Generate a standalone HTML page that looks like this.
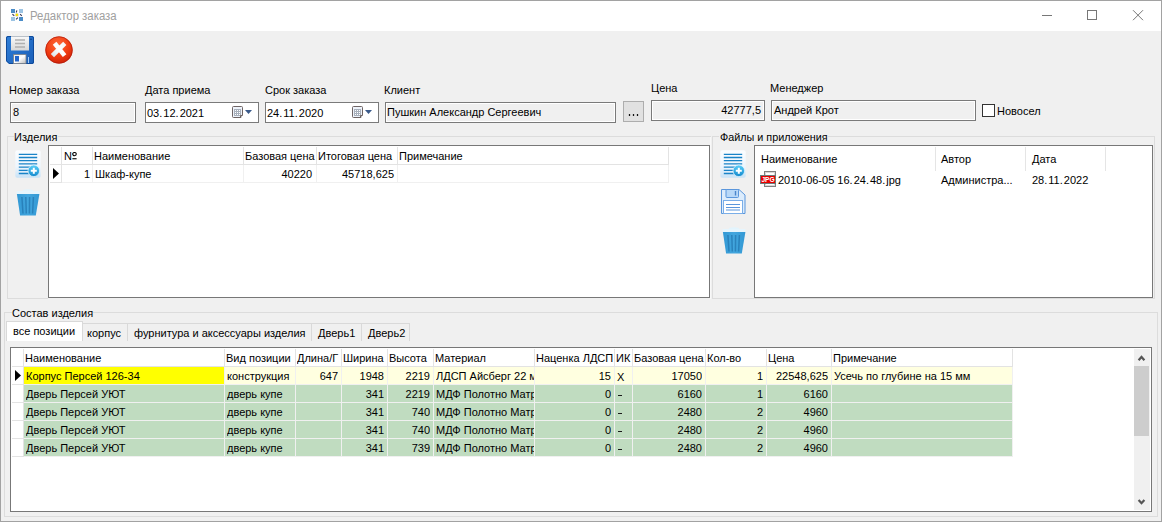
<!DOCTYPE html>
<html><head><meta charset="utf-8"><style>
html,body{margin:0;padding:0}
body{width:1162px;height:522px;position:relative;overflow:hidden;background:#f0f0f0;font-family:"Liberation Sans",sans-serif;font-size:11px;color:#000}
body div{position:absolute}
.t{white-space:nowrap;line-height:13px}
</style></head><body>
<div style="left:0px;top:0px;width:1162px;height:31px;background:#fff"></div>
<div style="left:0px;top:0px;width:1162px;height:1px;background:#a2a2a2"></div>
<div style="left:0px;top:0px;width:1px;height:522px;background:#a2a2a2"></div>
<div style="left:1161px;top:0px;width:1px;height:522px;background:#a2a2a2"></div>
<div style="left:0px;top:521px;width:1162px;height:1px;background:#a2a2a2"></div>
<svg style="position:absolute;left:11px;top:9px" width="12" height="12" viewBox="0 0 12 12">
<rect x="0" y="0" width="4" height="4" fill="#4a8cc8"/><rect x="8" y="0" width="4" height="4" fill="#9cc4e4"/>
<rect x="0" y="8" width="4" height="4" fill="#9cc4e4"/><rect x="8" y="8" width="4" height="4" fill="#4a8cc8"/>
<circle cx="5.9" cy="5.9" r="2.1" fill="#e4e4f8"/>
<circle cx="5.9" cy="5.9" r="1.4" fill="#f6e000"/>
<path d="M5.9 1.3L5.2 3.5M1.4 5.3L3.3 6.8M9.1 5.1L10.8 6.9M6.9 8.6L5 10.4" stroke="#3a3a58" stroke-width="1.1"/></svg>
<div class="t" style="left:30px;top:8px;font-size:12.3px;line-height:16px;color:#a0a0a0;transform:scaleX(0.925);transform-origin:0 0">Редактор заказа</div>
<svg style="position:absolute;left:1040px;top:8px" width="110" height="16" viewBox="0 0 110 16">
<path d="M2 7.5h10" stroke="#777" stroke-width="1"/>
<rect x="47.5" y="2.5" width="9" height="9" fill="none" stroke="#777" stroke-width="1"/>
<path d="M93 2.2L103 12.2M103 2.2L93 12.2" stroke="#777" stroke-width="1"/></svg>
<svg style="position:absolute;left:6px;top:36px" width="28" height="28" viewBox="0 0 28 28">
<defs><linearGradient id="fb" x1="0" y1="0" x2="1" y2="1"><stop offset="0" stop-color="#2f7fd8"/><stop offset="1" stop-color="#1b5fb8"/></linearGradient>
<linearGradient id="fl" x1="0" y1="0" x2="0" y2="1"><stop offset="0" stop-color="#fafafa"/><stop offset="1" stop-color="#d8d8d8"/></linearGradient>
<linearGradient id="fs" x1="0" y1="0" x2="1" y2="1"><stop offset="0" stop-color="#e8e8e8"/><stop offset="0.5" stop-color="#ffffff"/><stop offset="1" stop-color="#b8b8b8"/></linearGradient></defs>
<path d="M2 0H26Q28 0 28 2V26Q28 28 26 28H3L0 25V2Q0 0 2 0Z" fill="url(#fb)"/>
<path d="M0.5 2Q0.5 0.5 2 0.5H26Q27.5 0.5 27.5 2V26Q27.5 27.5 26 27.5H3.2L0.5 24.8Z" fill="none" stroke="#0f4a9a" stroke-width="1"/>
<rect x="5" y="0" width="18" height="14.5" fill="url(#fl)"/>
<path d="M5 0.5H23" stroke="#b8c0c8" stroke-width="1"/>
<path d="M9 4h10M9 7.5h10M9 11h10" stroke="#b0b0b0" stroke-width="1.6"/>
<rect x="7.5" y="18.5" width="12.5" height="9" fill="url(#fs)" stroke="#7a8088" stroke-width="0.8"/>
<rect x="9" y="20" width="4" height="5.5" fill="#2266cc"/>
<path d="M22.5 21V27" stroke="#a8ccf4" stroke-width="1"/>
<circle cx="25" cy="3.2" r="0.8" fill="#0a3a80"/></svg>
<svg style="position:absolute;left:45px;top:36px" width="28" height="28" viewBox="0 0 28 28">
<defs><radialGradient id="rc" cx="0.45" cy="0.3" r="0.75"><stop offset="0" stop-color="#ff6a3a"/><stop offset="0.6" stop-color="#f03a10"/><stop offset="1" stop-color="#c82008"/></radialGradient>
<linearGradient id="xw" gradientUnits="userSpaceOnUse" x1="7" y1="20" x2="20" y2="7"><stop offset="0" stop-color="#d8e4ea"/><stop offset="0.5" stop-color="#ffffff"/><stop offset="1" stop-color="#f4f4f4"/></linearGradient></defs>
<circle cx="14" cy="14" r="13.6" fill="url(#rc)"/>
<circle cx="14" cy="14" r="13.3" fill="none" stroke="#b01a0a" stroke-width="0.7"/>
<path d="M9.6 7.2L19.6 19.6M19.8 7.4L7.4 19.6" stroke="url(#xw)" stroke-width="4.6" stroke-linecap="butt"/></svg>
<div class="t" style="left:9px;top:84px;font-size:11px;">Номер заказа</div>
<div class="t" style="left:145px;top:84px;font-size:11px;">Дата приема</div>
<div class="t" style="left:265px;top:84px;font-size:11px;">Срок заказа</div>
<div class="t" style="left:384px;top:84px;font-size:11px;">Клиент</div>
<div class="t" style="left:651px;top:82px;font-size:11px;">Цена</div>
<div class="t" style="left:770px;top:82px;font-size:11px;">Менеджер</div>
<div style="left:10px;top:102px;width:126px;height:21px;background:#f0f0f0;border:1px solid #7a7a7a;box-sizing:border-box"></div>
<div style="left:11px;top:103px;width:124px;height:19px;border:1px solid #fff;box-sizing:border-box"></div>
<div class="t" style="left:13px;top:106px;font-size:11px;">8</div>
<div style="left:145px;top:102px;width:114px;height:21px;background:#fff;border:1px solid #7a7a7a;box-sizing:border-box"></div>
<div class="t" style="left:147px;top:107px;font-size:11px;">03<span style="margin-right:1px">.</span>12<span style="margin-right:1px">.</span>2021</div>
<svg style="position:absolute;left:232px;top:106px" width="22" height="12" viewBox="0 0 22 12">
<path d="M1.5 0.5H9.5Q10.5 0.5 10.5 1.5V9L9 10.5V11.5H1.5Q0.5 11.5 0.5 10.5V1.5Q0.5 0.5 1.5 0.5Z" fill="#eef3fb" stroke="#6e6464"/>
<rect x="2" y="3" width="7" height="7" fill="#a8b0bc"/>
<path d="M3 4h1v1h-1zM5 4h1v1h-1zM7 4h1v1h-1zM3 6h1v1h-1zM5 6h1v1h-1zM7 6h1v1h-1zM3 8h1v1h-1zM5 8h1v1h-1zM7 8h1v1h-1z" fill="#fff"/>
<path d="M8.5 11.5V9.5H10.5" fill="none" stroke="#6e6464"/>
<path d="M13 4H20L16.5 8Z" fill="#3a5a8a"/></svg>
<div style="left:265px;top:102px;width:114px;height:21px;background:#fff;border:1px solid #7a7a7a;box-sizing:border-box"></div>
<div class="t" style="left:267px;top:107px;font-size:11px;">24<span style="margin-right:1px">.</span>11<span style="margin-right:1px">.</span>2020</div>
<svg style="position:absolute;left:352px;top:106px" width="22" height="12" viewBox="0 0 22 12">
<path d="M1.5 0.5H9.5Q10.5 0.5 10.5 1.5V9L9 10.5V11.5H1.5Q0.5 11.5 0.5 10.5V1.5Q0.5 0.5 1.5 0.5Z" fill="#eef3fb" stroke="#6e6464"/>
<rect x="2" y="3" width="7" height="7" fill="#a8b0bc"/>
<path d="M3 4h1v1h-1zM5 4h1v1h-1zM7 4h1v1h-1zM3 6h1v1h-1zM5 6h1v1h-1zM7 6h1v1h-1zM3 8h1v1h-1zM5 8h1v1h-1zM7 8h1v1h-1z" fill="#fff"/>
<path d="M8.5 11.5V9.5H10.5" fill="none" stroke="#6e6464"/>
<path d="M13 4H20L16.5 8Z" fill="#3a5a8a"/></svg>
<div style="left:385px;top:102px;width:231px;height:21px;background:#f0f0f0;border:1px solid #7a7a7a;box-sizing:border-box"></div>
<div style="left:386px;top:103px;width:229px;height:19px;border:1px solid #fff;box-sizing:border-box"></div>
<div class="t" style="left:387px;top:106px;font-size:11px;">Пушкин Александр Сергеевич</div>
<div style="left:623px;top:101px;width:21px;height:21px;background:#e1e1e1;border:1px solid #adadad;box-sizing:border-box"></div>
<div style="left:628px;top:114px;width:3px;height:2px;background:#c4c4c4"></div>
<div style="left:629px;top:114px;width:1px;height:2px;background:#111"></div>
<div style="left:632px;top:114px;width:3px;height:2px;background:#c4c4c4"></div>
<div style="left:633px;top:114px;width:1px;height:2px;background:#111"></div>
<div style="left:636px;top:114px;width:3px;height:2px;background:#c4c4c4"></div>
<div style="left:637px;top:114px;width:1px;height:2px;background:#111"></div>
<div style="left:651px;top:100px;width:114px;height:21px;background:#f0f0f0;border:1px solid #7a7a7a;box-sizing:border-box"></div>
<div style="left:652px;top:101px;width:112px;height:19px;border:1px solid #fff;box-sizing:border-box"></div>
<div class="t" style="left:661px;top:104px;width:100px;text-align:right;font-size:11px;">42777,5</div>
<div style="left:771px;top:100px;width:205px;height:21px;background:#f0f0f0;border:1px solid #7a7a7a;box-sizing:border-box"></div>
<div style="left:772px;top:101px;width:203px;height:19px;border:1px solid #fff;box-sizing:border-box"></div>
<div class="t" style="left:774px;top:104px;font-size:11px;">Андрей Крот</div>
<div style="left:982px;top:104px;width:13px;height:13px;background:#fff;border:1px solid #333;box-sizing:border-box"></div>
<div class="t" style="left:997px;top:105px;font-size:11px;">Новосел</div>
<div style="left:7px;top:136px;width:704px;height:1px;background:#dcdcdc"></div>
<div style="left:7px;top:298px;width:704px;height:1px;background:#dcdcdc"></div>
<div style="left:7px;top:136px;width:1px;height:163px;background:#dcdcdc"></div>
<div style="left:710px;top:136px;width:1px;height:163px;background:#dcdcdc"></div>
<div style="left:14px;top:130px;width:44px;height:12px;background:#f0f0f0"></div>
<div class="t" style="left:14px;top:131px;font-size:11px;">Изделия</div>
<div style="left:48px;top:298px;width:663px;height:1px;background:#f0f0f0"></div>
<div style="left:710px;top:137px;width:1px;height:162px;background:#f8f8f8"></div>
<div style="left:711px;top:136px;width:1px;height:1px;background:#f0f0f0"></div>
<div style="left:712px;top:136px;width:443px;height:1px;background:#dcdcdc"></div>
<div style="left:712px;top:298px;width:443px;height:1px;background:#dcdcdc"></div>
<div style="left:712px;top:136px;width:1px;height:163px;background:#dcdcdc"></div>
<div style="left:1154px;top:136px;width:1px;height:163px;background:#dcdcdc"></div>
<div style="left:719px;top:130px;width:109px;height:12px;background:#f0f0f0"></div>
<div class="t" style="left:720px;top:131px;font-size:11px;font-size:10.8px">Файлы и приложения</div>
<div style="left:4px;top:312px;width:1154px;height:1px;background:#dcdcdc"></div>
<div style="left:4px;top:516px;width:1154px;height:1px;background:#dcdcdc"></div>
<div style="left:4px;top:312px;width:1px;height:205px;background:#dcdcdc"></div>
<div style="left:1157px;top:312px;width:1px;height:205px;background:#dcdcdc"></div>
<div style="left:12px;top:306px;width:81px;height:12px;background:#f0f0f0"></div>
<div class="t" style="left:12px;top:307px;font-size:11px;">Состав изделия</div>
<svg style="position:absolute;left:15px;top:150px" width="26" height="28" viewBox="0 0 26 28">
<defs><linearGradient id="ad15" x1="0" y1="0" x2="0" y2="1"><stop offset="0" stop-color="#fbfdff"/><stop offset="0.6" stop-color="#eef6fd"/><stop offset="1" stop-color="#c8e2f6"/></linearGradient>
<linearGradient id="pc15" x1="0" y1="0" x2="0" y2="1"><stop offset="0" stop-color="#5ad0fa"/><stop offset="1" stop-color="#1288cc"/></linearGradient></defs>
<rect x="0.3" y="0.3" width="25.4" height="27.4" rx="2" fill="url(#ad15)"/>
<path d="M3.8 4.3h18.4M3.8 7.5h18.4M3.8 10.7h18.4M3.8 13.9h18.4M3.8 17.1h12M3.8 20.3h10M3.8 23.5h10" stroke="#1a84c8" stroke-width="1.3"/>
<circle cx="18.8" cy="20.8" r="5.8" fill="url(#pc15)" stroke="#e8f6fe" stroke-width="0.7"/>
<path d="M18.8 17.8v6M15.8 20.8h6" stroke="#fff" stroke-width="2"/></svg>
<svg style="position:absolute;left:16px;top:189px" width="24" height="27" viewBox="0 0 24 27">
<defs><linearGradient id="tr16" x1="0" y1="0" x2="1" y2="0"><stop offset="0" stop-color="#3298d4"/><stop offset="0.5" stop-color="#42a6de"/><stop offset="1" stop-color="#3298d4"/></linearGradient></defs>
<path d="M7 2V1Q12 -0.6 17 1V2Z" fill="#e2f4fd"/>
<rect x="0.6" y="2" width="22.8" height="3" fill="#e6f5fd"/>
<path d="M0.9 5H23.4L19.8 26.6H4.1Z" fill="url(#tr16)"/>
<path d="M5.9 8L7 24.5M9.8 8L10.3 24.5M13.6 8L13.4 24.5M17.4 8L16.6 24.5" stroke="#2378b2" stroke-width="1.5" opacity="0.75"/></svg>
<svg style="position:absolute;left:720px;top:150px" width="26" height="28" viewBox="0 0 26 28">
<defs><linearGradient id="ad720" x1="0" y1="0" x2="0" y2="1"><stop offset="0" stop-color="#fbfdff"/><stop offset="0.6" stop-color="#eef6fd"/><stop offset="1" stop-color="#c8e2f6"/></linearGradient>
<linearGradient id="pc720" x1="0" y1="0" x2="0" y2="1"><stop offset="0" stop-color="#5ad0fa"/><stop offset="1" stop-color="#1288cc"/></linearGradient></defs>
<rect x="0.3" y="0.3" width="25.4" height="27.4" rx="2" fill="url(#ad720)"/>
<path d="M3.8 4.3h18.4M3.8 7.5h18.4M3.8 10.7h18.4M3.8 13.9h18.4M3.8 17.1h12M3.8 20.3h10M3.8 23.5h10" stroke="#1a84c8" stroke-width="1.3"/>
<circle cx="18.8" cy="20.8" r="5.8" fill="url(#pc720)" stroke="#e8f6fe" stroke-width="0.7"/>
<path d="M18.8 17.8v6M15.8 20.8h6" stroke="#fff" stroke-width="2"/></svg>
<svg style="position:absolute;left:720px;top:188px" width="26" height="27" viewBox="0 0 26 27">
<path d="M1.5 1.5H19L25 7V25.5H1.5Z" fill="#dcecfc" stroke="#5a96dc" stroke-width="1"/>
<rect x="6" y="1.5" width="12.5" height="8" rx="1" fill="#b8d8f8" stroke="#5a96dc" stroke-width="1"/>
<path d="M15.5 3v4.5" stroke="#4a86cc" stroke-width="1.4"/>
<rect x="3.5" y="12.5" width="19" height="13" fill="#fff" stroke="#7aaee8" stroke-width="1"/>
<path d="M6 16.5h14M6 19.5h14M6 22h14" stroke="#5a96dc" stroke-width="1"/></svg>
<svg style="position:absolute;left:722px;top:227px" width="24" height="27" viewBox="0 0 24 27">
<defs><linearGradient id="tr722" x1="0" y1="0" x2="1" y2="0"><stop offset="0" stop-color="#3298d4"/><stop offset="0.5" stop-color="#42a6de"/><stop offset="1" stop-color="#3298d4"/></linearGradient></defs>
<path d="M7 2V1Q12 -0.6 17 1V2Z" fill="#e2f4fd"/>
<rect x="0.6" y="2" width="22.8" height="3" fill="#e6f5fd"/>
<path d="M0.9 5H23.4L19.8 26.6H4.1Z" fill="url(#tr722)"/>
<path d="M5.9 8L7 24.5M9.8 8L10.3 24.5M13.6 8L13.4 24.5M17.4 8L16.6 24.5" stroke="#2378b2" stroke-width="1.5" opacity="0.75"/></svg>
<div style="left:48px;top:145px;width:662px;height:153px;background:#fff;border:1px solid #777;box-sizing:border-box"></div>
<div style="left:50px;top:164px;width:619px;height:1px;background:#e3e3e3"></div>
<div style="left:50px;top:182px;width:12px;height:1px;background:#e3e3e3"></div>
<div style="left:62px;top:182px;width:607px;height:1px;background:#f0f0f0"></div>
<div style="left:61px;top:147px;width:1px;height:18px;background:#e3e3e3"></div>
<div style="left:92px;top:147px;width:1px;height:18px;background:#e3e3e3"></div>
<div style="left:243px;top:147px;width:1px;height:18px;background:#e3e3e3"></div>
<div style="left:316px;top:147px;width:1px;height:18px;background:#e3e3e3"></div>
<div style="left:397px;top:147px;width:1px;height:18px;background:#e3e3e3"></div>
<div style="left:668px;top:147px;width:1px;height:18px;background:#e3e3e3"></div>
<div style="left:61px;top:165px;width:1px;height:18px;background:#e3e3e3"></div>
<div style="left:92px;top:165px;width:1px;height:17px;background:#f0f0f0"></div>
<div style="left:243px;top:165px;width:1px;height:17px;background:#f0f0f0"></div>
<div style="left:316px;top:165px;width:1px;height:17px;background:#f0f0f0"></div>
<div style="left:397px;top:165px;width:1px;height:17px;background:#f0f0f0"></div>
<div style="left:668px;top:165px;width:1px;height:17px;background:#f0f0f0"></div>
<div class="t" style="left:64px;top:150px;font-size:11px;">N</div>
<svg style="position:absolute;left:72px;top:152px" width="5" height="8" viewBox="0 0 5 8"><ellipse cx="2.5" cy="2.1" rx="1.8" ry="1.6" fill="none" stroke="#000" stroke-width="1.1"/><rect x="0.4" y="6.2" width="4.2" height="1.1" fill="#000"/></svg>
<div class="t" style="left:94px;top:150px;font-size:11px;">Наименование</div>
<div class="t" style="left:245px;top:150px;font-size:11px;">Базовая цена</div>
<div class="t" style="left:318px;top:150px;font-size:11px;">Итоговая цена</div>
<div class="t" style="left:399px;top:150px;font-size:11px;">Примечание</div>
<div class="t" style="left:60px;top:168px;width:30px;text-align:right;font-size:11px;">1</div>
<div class="t" style="left:95px;top:168px;font-size:11px;">Шкаф-купе</div>
<div class="t" style="left:252px;top:168px;width:60px;text-align:right;font-size:11px;">40220</div>
<div class="t" style="left:324px;top:168px;width:70px;text-align:right;font-size:11px;">45718,625</div>
<svg style="position:absolute;left:53px;top:168px" width="7" height="11" viewBox="0 0 7 11"><path d="M0 0L6 5.5L0 11Z" fill="#000"/></svg>
<div style="left:754px;top:145px;width:399px;height:153px;background:#fff;border:1px solid #777;box-sizing:border-box"></div>
<div style="left:935px;top:147px;width:1px;height:24px;background:#e5e5e5"></div>
<div style="left:1025px;top:147px;width:1px;height:24px;background:#e5e5e5"></div>
<div style="left:1105px;top:147px;width:1px;height:24px;background:#e5e5e5"></div>
<div class="t" style="left:761px;top:153px;font-size:11px;">Наименование</div>
<div class="t" style="left:941px;top:153px;font-size:11px;">Автор</div>
<div class="t" style="left:1032px;top:153px;font-size:11px;">Дата</div>
<svg style="position:absolute;left:760px;top:171px" width="16" height="16" viewBox="0 0 16 16">
<rect x="4.5" y="0.5" width="11" height="15" fill="#fff" stroke="#808080"/>
<rect x="5.5" y="1.5" width="9" height="13" fill="none" stroke="#d8d8d8"/>
<rect x="0.5" y="4.5" width="15" height="8" fill="#e80000" stroke="#6a7a7a"/>
<text x="8" y="11" font-family="Liberation Sans" font-weight="bold" font-size="6.6" fill="#fff" text-anchor="middle">JPG</text></svg>
<div class="t" style="left:778px;top:174px;font-size:11px;">2010-06-05 16<span style="margin-right:1px">.</span>24<span style="margin-right:1px">.</span>48<span style="margin-right:1px">.</span>jpg</div>
<div class="t" style="left:941px;top:174px;font-size:11px;">Администра...</div>
<div class="t" style="left:1032px;top:174px;font-size:11px;">28<span style="margin-right:1px">.</span>11<span style="margin-right:1px">.</span>2022</div>
<div style="left:6px;top:321px;width:77px;height:20px;background:#fff;border:1px solid #d9d9d9;border-bottom:none;box-sizing:border-box"></div>
<div style="left:82px;top:323px;width:46px;height:18px;border:1px solid #d9d9d9;border-bottom:none;box-sizing:border-box"></div>
<div style="left:127px;top:323px;width:185px;height:18px;border:1px solid #d9d9d9;border-bottom:none;box-sizing:border-box"></div>
<div style="left:311px;top:323px;width:51px;height:18px;border:1px solid #d9d9d9;border-bottom:none;box-sizing:border-box"></div>
<div style="left:361px;top:323px;width:49px;height:18px;border:1px solid #d9d9d9;border-bottom:none;box-sizing:border-box"></div>
<div class="t" style="left:13px;top:325px;font-size:11px;">все позиции</div>
<div class="t" style="left:87px;top:327px;font-size:11px;">корпус</div>
<div class="t" style="left:134px;top:327px;font-size:11px;">фурнитура и аксессуары изделия</div>
<div class="t" style="left:318px;top:327px;font-size:11px;">Дверь1</div>
<div class="t" style="left:368px;top:327px;font-size:11px;">Дверь2</div>
<div style="left:10px;top:347px;width:1142px;height:165px;background:#fff;border:1px solid #777;box-sizing:border-box"></div>
<div style="left:24px;top:367px;width:200px;height:17px;background:#ffff00"></div>
<div style="left:225px;top:367px;width:787px;height:17px;background:#ffffe0"></div>
<div style="left:24px;top:385px;width:988px;height:17px;background:#c0dcc0"></div>
<div style="left:24px;top:403px;width:988px;height:17px;background:#c0dcc0"></div>
<div style="left:24px;top:421px;width:988px;height:17px;background:#c0dcc0"></div>
<div style="left:24px;top:439px;width:988px;height:17px;background:#c0dcc0"></div>
<div style="left:12px;top:366px;width:1001px;height:1px;background:#e3e3e3"></div>
<div style="left:12px;top:384px;width:12px;height:1px;background:#e3e3e3"></div>
<div style="left:24px;top:384px;width:989px;height:1px;background:#f0f0f0"></div>
<div style="left:12px;top:402px;width:12px;height:1px;background:#e3e3e3"></div>
<div style="left:24px;top:402px;width:989px;height:1px;background:#f0f0f0"></div>
<div style="left:12px;top:420px;width:12px;height:1px;background:#e3e3e3"></div>
<div style="left:24px;top:420px;width:989px;height:1px;background:#f0f0f0"></div>
<div style="left:12px;top:438px;width:12px;height:1px;background:#e3e3e3"></div>
<div style="left:24px;top:438px;width:989px;height:1px;background:#f0f0f0"></div>
<div style="left:12px;top:456px;width:12px;height:1px;background:#e3e3e3"></div>
<div style="left:24px;top:456px;width:989px;height:1px;background:#f0f0f0"></div>
<div style="left:23px;top:349px;width:1px;height:18px;background:#e3e3e3"></div>
<div style="left:224px;top:349px;width:1px;height:18px;background:#e3e3e3"></div>
<div style="left:295px;top:349px;width:1px;height:18px;background:#e3e3e3"></div>
<div style="left:341px;top:349px;width:1px;height:18px;background:#e3e3e3"></div>
<div style="left:387px;top:349px;width:1px;height:18px;background:#e3e3e3"></div>
<div style="left:433px;top:349px;width:1px;height:18px;background:#e3e3e3"></div>
<div style="left:534px;top:349px;width:1px;height:18px;background:#e3e3e3"></div>
<div style="left:614px;top:349px;width:1px;height:18px;background:#e3e3e3"></div>
<div style="left:632px;top:349px;width:1px;height:18px;background:#e3e3e3"></div>
<div style="left:705px;top:349px;width:1px;height:18px;background:#e3e3e3"></div>
<div style="left:766px;top:349px;width:1px;height:18px;background:#e3e3e3"></div>
<div style="left:831px;top:349px;width:1px;height:18px;background:#e3e3e3"></div>
<div style="left:1012px;top:349px;width:1px;height:18px;background:#e3e3e3"></div>
<div style="left:23px;top:367px;width:1px;height:90px;background:#e3e3e3"></div>
<div style="left:224px;top:367px;width:1px;height:90px;background:#f0f0f0"></div>
<div style="left:295px;top:367px;width:1px;height:90px;background:#f0f0f0"></div>
<div style="left:341px;top:367px;width:1px;height:90px;background:#f0f0f0"></div>
<div style="left:387px;top:367px;width:1px;height:90px;background:#f0f0f0"></div>
<div style="left:433px;top:367px;width:1px;height:90px;background:#f0f0f0"></div>
<div style="left:534px;top:367px;width:1px;height:90px;background:#f0f0f0"></div>
<div style="left:614px;top:367px;width:1px;height:90px;background:#f0f0f0"></div>
<div style="left:632px;top:367px;width:1px;height:90px;background:#f0f0f0"></div>
<div style="left:705px;top:367px;width:1px;height:90px;background:#f0f0f0"></div>
<div style="left:766px;top:367px;width:1px;height:90px;background:#f0f0f0"></div>
<div style="left:831px;top:367px;width:1px;height:90px;background:#f0f0f0"></div>
<div style="left:1012px;top:367px;width:1px;height:90px;background:#f0f0f0"></div>
<div class="t" style="left:25px;top:352px;width:199px;overflow:hidden">Наименование</div>
<div class="t" style="left:226px;top:352px;width:69px;overflow:hidden">Вид позиции</div>
<div class="t" style="left:297px;top:352px;width:44px;overflow:hidden">Длина/Г</div>
<div class="t" style="left:343px;top:352px;width:44px;overflow:hidden">Ширина</div>
<div class="t" style="left:389px;top:352px;width:44px;overflow:hidden">Высота</div>
<div class="t" style="left:435px;top:352px;width:99px;overflow:hidden">Материал</div>
<div class="t" style="left:536px;top:352px;width:78px;overflow:hidden">Наценка ЛДСП</div>
<div class="t" style="left:616px;top:352px;width:16px;overflow:hidden">ИК</div>
<div class="t" style="left:634px;top:352px;width:71px;overflow:hidden">Базовая цена</div>
<div class="t" style="left:707px;top:352px;width:59px;overflow:hidden">Кол-во</div>
<div class="t" style="left:768px;top:352px;width:63px;overflow:hidden">Цена</div>
<div class="t" style="left:833px;top:352px;width:179px;overflow:hidden">Примечание</div>
<div class="t" style="left:26px;top:370px;width:198px;overflow:hidden">Корпус Персей 126-34</div>
<div class="t" style="left:227px;top:370px;width:68px;overflow:hidden">конструкция</div>
<div class="t" style="left:297px;top:370px;width:41px;text-align:right;overflow:hidden">647</div>
<div class="t" style="left:343px;top:370px;width:41px;text-align:right;overflow:hidden">1948</div>
<div class="t" style="left:389px;top:370px;width:41px;text-align:right;overflow:hidden">2219</div>
<div class="t" style="left:436px;top:370px;width:98px;overflow:hidden">ЛДСП Айсберг 22 мм</div>
<div class="t" style="left:536px;top:370px;width:75px;text-align:right;overflow:hidden">15</div>
<div class="t" style="left:617px;top:371px">Х</div>
<div class="t" style="left:634px;top:370px;width:68px;text-align:right;overflow:hidden">17050</div>
<div class="t" style="left:707px;top:370px;width:56px;text-align:right;overflow:hidden">1</div>
<div class="t" style="left:768px;top:370px;width:60px;text-align:right;overflow:hidden">22548,625</div>
<div class="t" style="left:834px;top:370px;width:178px;overflow:hidden">Усечь по глубине на 15 мм</div>
<div class="t" style="left:26px;top:388px;width:198px;overflow:hidden">Дверь Персей УЮТ</div>
<div class="t" style="left:227px;top:388px;width:68px;overflow:hidden">дверь купе</div>
<div class="t" style="left:343px;top:388px;width:41px;text-align:right;overflow:hidden">341</div>
<div class="t" style="left:389px;top:388px;width:41px;text-align:right;overflow:hidden">2219</div>
<div class="t" style="left:436px;top:388px;width:98px;overflow:hidden">МДФ Полотно Матрица</div>
<div class="t" style="left:536px;top:388px;width:75px;text-align:right;overflow:hidden">0</div>
<div style="left:618px;top:395px;width:4px;height:1px;background:#1a1a1a"></div>
<div class="t" style="left:634px;top:388px;width:68px;text-align:right;overflow:hidden">6160</div>
<div class="t" style="left:707px;top:388px;width:56px;text-align:right;overflow:hidden">1</div>
<div class="t" style="left:768px;top:388px;width:60px;text-align:right;overflow:hidden">6160</div>
<div class="t" style="left:26px;top:406px;width:198px;overflow:hidden">Дверь Персей УЮТ</div>
<div class="t" style="left:227px;top:406px;width:68px;overflow:hidden">дверь купе</div>
<div class="t" style="left:343px;top:406px;width:41px;text-align:right;overflow:hidden">341</div>
<div class="t" style="left:389px;top:406px;width:41px;text-align:right;overflow:hidden">740</div>
<div class="t" style="left:436px;top:406px;width:98px;overflow:hidden">МДФ Полотно Матрица</div>
<div class="t" style="left:536px;top:406px;width:75px;text-align:right;overflow:hidden">0</div>
<div style="left:618px;top:413px;width:4px;height:1px;background:#1a1a1a"></div>
<div class="t" style="left:634px;top:406px;width:68px;text-align:right;overflow:hidden">2480</div>
<div class="t" style="left:707px;top:406px;width:56px;text-align:right;overflow:hidden">2</div>
<div class="t" style="left:768px;top:406px;width:60px;text-align:right;overflow:hidden">4960</div>
<div class="t" style="left:26px;top:424px;width:198px;overflow:hidden">Дверь Персей УЮТ</div>
<div class="t" style="left:227px;top:424px;width:68px;overflow:hidden">дверь купе</div>
<div class="t" style="left:343px;top:424px;width:41px;text-align:right;overflow:hidden">341</div>
<div class="t" style="left:389px;top:424px;width:41px;text-align:right;overflow:hidden">740</div>
<div class="t" style="left:436px;top:424px;width:98px;overflow:hidden">МДФ Полотно Матрица</div>
<div class="t" style="left:536px;top:424px;width:75px;text-align:right;overflow:hidden">0</div>
<div style="left:618px;top:431px;width:4px;height:1px;background:#1a1a1a"></div>
<div class="t" style="left:634px;top:424px;width:68px;text-align:right;overflow:hidden">2480</div>
<div class="t" style="left:707px;top:424px;width:56px;text-align:right;overflow:hidden">2</div>
<div class="t" style="left:768px;top:424px;width:60px;text-align:right;overflow:hidden">4960</div>
<div class="t" style="left:26px;top:442px;width:198px;overflow:hidden">Дверь Персей УЮТ</div>
<div class="t" style="left:227px;top:442px;width:68px;overflow:hidden">дверь купе</div>
<div class="t" style="left:343px;top:442px;width:41px;text-align:right;overflow:hidden">341</div>
<div class="t" style="left:389px;top:442px;width:41px;text-align:right;overflow:hidden">739</div>
<div class="t" style="left:436px;top:442px;width:98px;overflow:hidden">МДФ Полотно Матрица</div>
<div class="t" style="left:536px;top:442px;width:75px;text-align:right;overflow:hidden">0</div>
<div style="left:618px;top:449px;width:4px;height:1px;background:#1a1a1a"></div>
<div class="t" style="left:634px;top:442px;width:68px;text-align:right;overflow:hidden">2480</div>
<div class="t" style="left:707px;top:442px;width:56px;text-align:right;overflow:hidden">2</div>
<div class="t" style="left:768px;top:442px;width:60px;text-align:right;overflow:hidden">4960</div>
<svg style="position:absolute;left:15px;top:370px" width="7" height="11" viewBox="0 0 7 11"><path d="M0 0L6 5.5L0 11Z" fill="#000"/></svg>
<div style="left:1134px;top:349px;width:16px;height:161px;background:#f0f0f0"></div>
<div style="left:1134px;top:366px;width:15px;height:70px;background:#cdcdcd"></div>
<svg style="position:absolute;left:1134px;top:349px" width="16" height="161" viewBox="0 0 16 161">
<path d="M4.6 11.2L7.5 8L10.4 11.2" fill="none" stroke="#555" stroke-width="2.2"/>
<path d="M4.6 151L7.5 154.2L10.4 151" fill="none" stroke="#555" stroke-width="2.2"/></svg>
</body></html>
